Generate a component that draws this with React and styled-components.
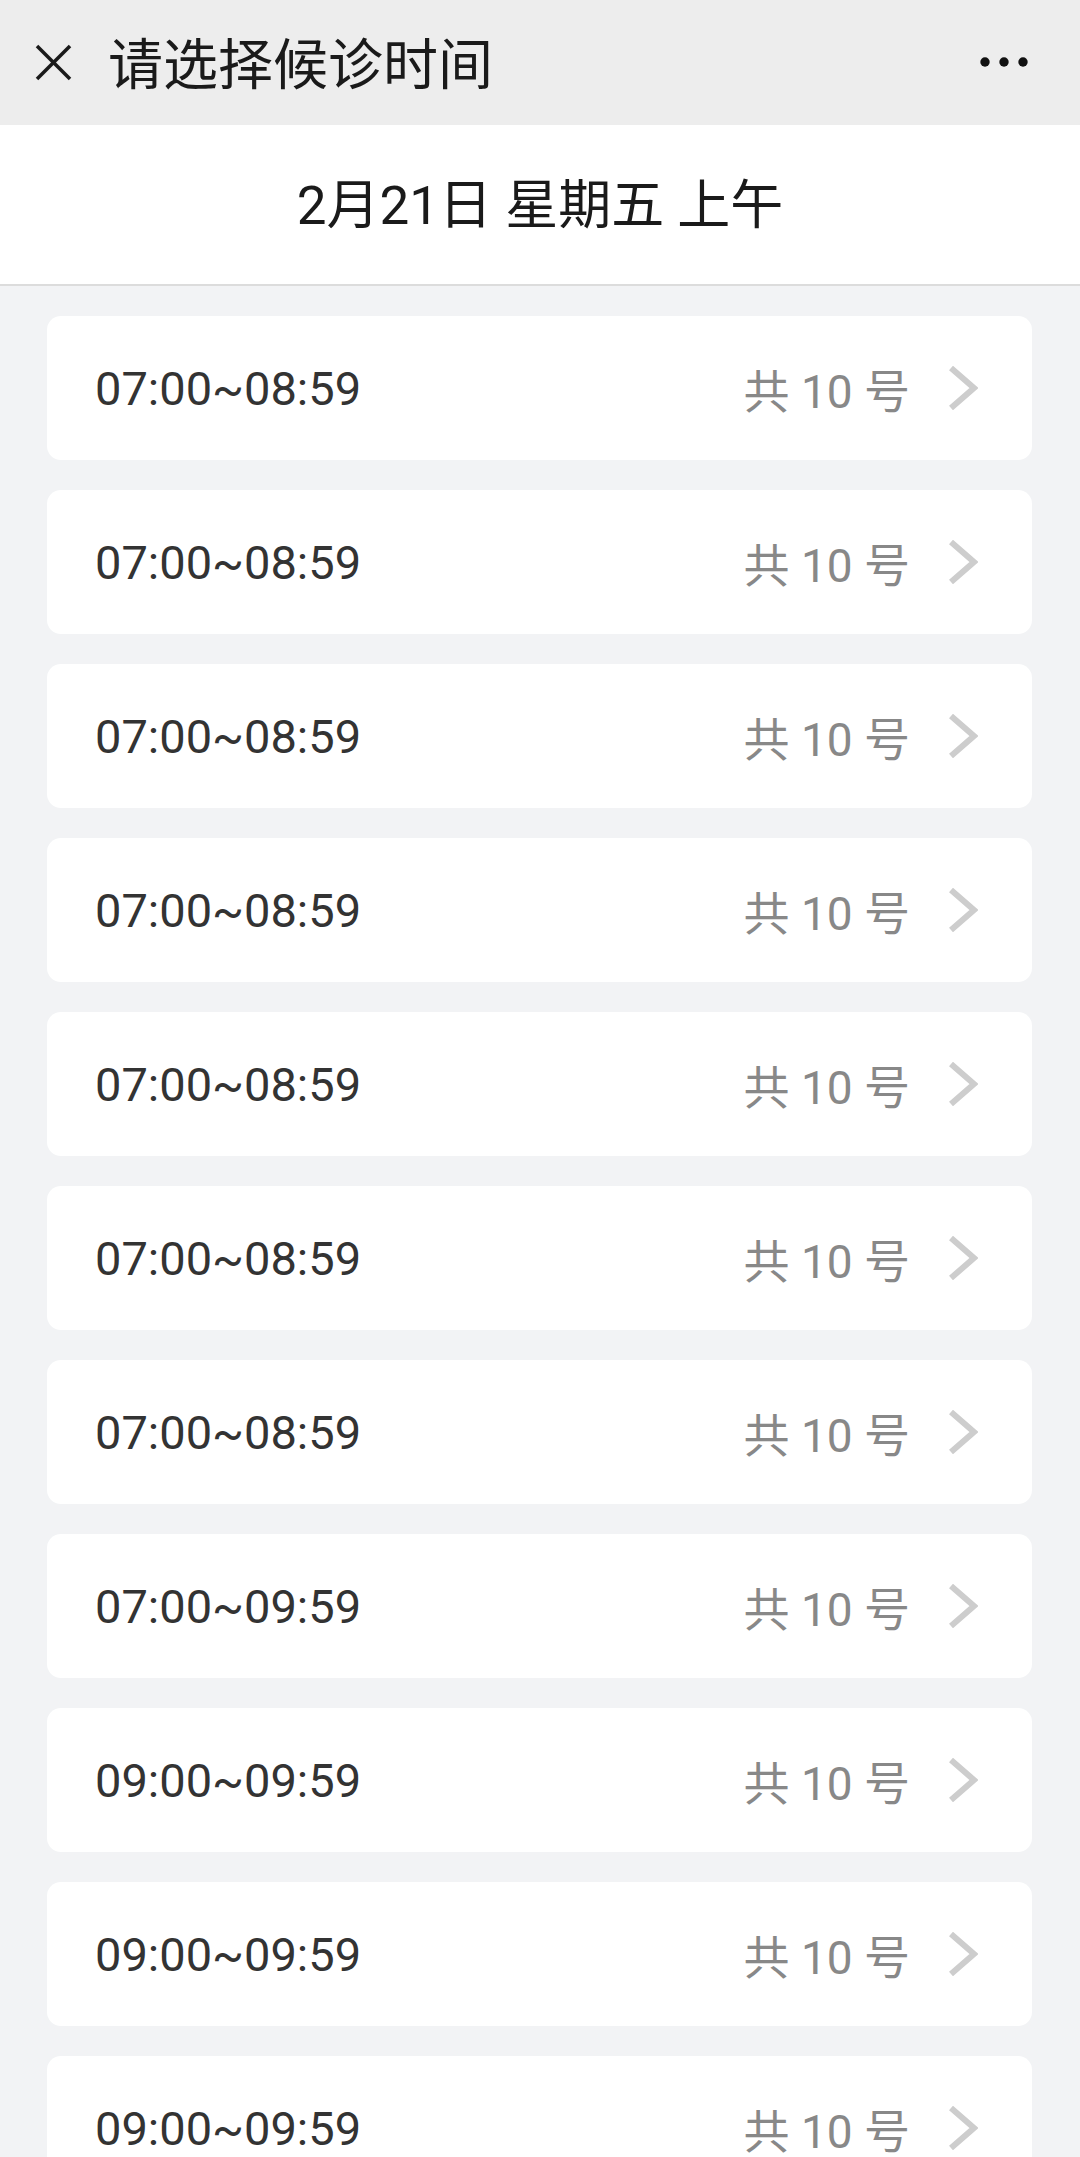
import React from "react";
import styled, { createGlobalStyle } from "styled-components";

const GlobalStyle = createGlobalStyle`
  html, body {
    margin: 0;
    padding: 0;
    background: #f2f3f5;
    font-family: Roboto, "Noto Sans CJK SC", sans-serif;
  }
`;

const slots = [
  "07:00~08:59",
  "07:00~08:59",
  "07:00~08:59",
  "07:00~08:59",
  "07:00~08:59",
  "07:00~08:59",
  "07:00~08:59",
  "07:00~09:59",
  "09:00~09:59",
  "09:00~09:59",
  "09:00~09:59",
];

function App() {
  return (
    <Page>
      <GlobalStyle />
      <TopBar>
        <CloseButton>
          <svg width="37" height="37" viewBox="0 0 37 37" fill="none">
            <line x1="2" y1="2" x2="35" y2="35" stroke="#1a1a1a" strokeWidth="3.6" />
            <line x1="35" y1="2" x2="2" y2="35" stroke="#1a1a1a" strokeWidth="3.6" />
          </svg>
        </CloseButton>
        <Title>请选择候诊时间</Title>
        <MoreButton>
          <svg width="48" height="12" viewBox="0 0 48 12">
            <circle cx="5" cy="6" r="4.7" fill="#111" />
            <circle cx="24" cy="6" r="4.7" fill="#111" />
            <circle cx="43" cy="6" r="4.7" fill="#111" />
          </svg>
        </MoreButton>
      </TopBar>
      <DateBar>2月21日 星期五 上午</DateBar>
      <SlotList>
        {slots.map((time, i) => (
          <SlotCard key={i}>
            <SlotTime>{time}</SlotTime>
            <SlotRight>
              <SlotCount>共 10 号</SlotCount>
              <Chevron>
                <svg width="30" height="44" viewBox="0 0 30 44" fill="none">
                  <polyline
                    points="3,2 26,22 3,42"
                    stroke="#cdcdcd"
                    strokeWidth="6"
                    strokeLinejoin="miter"
                  />
                </svg>
              </Chevron>
            </SlotRight>
          </SlotCard>
        ))}
      </SlotList>
    </Page>
  );
}

const Page = styled.div`
  width: 1080px;
  min-height: 2157px;
  background: #f2f3f5;
`;

const TopBar = styled.div`
  height: 125px;
  background: #ededed;
  display: flex;
  align-items: center;
  padding: 0 52px 0 35px;
  box-sizing: border-box;
`;

const CloseButton = styled.div`
  width: 37px;
  height: 37px;
  display: flex;
`;

const Title = styled.div`
  margin-left: 36px;
  margin-bottom: 5px;
  font-size: 55px;
  color: #1a1a1a;
  font-family: "Noto Sans CJK SC", sans-serif;
  line-height: 1;
  flex: 1;
`;

const MoreButton = styled.div`
  display: flex;
  align-items: center;
  margin-bottom: 2px;
`;

const DateBar = styled.div`
  height: 161px;
  box-sizing: border-box;
  padding-bottom: 8px;
  background: #ffffff;
  border-bottom: 2px solid #dcdcdc;
  display: flex;
  align-items: center;
  justify-content: center;
  font-size: 53px;
  color: #1a1a1a;
`;

const SlotList = styled.div`
  display: flex;
  flex-direction: column;
  gap: 30px;
  padding: 30px 48px 0 47px;
`;

const SlotCard = styled.div`
  height: 144px;
  background: #ffffff;
  border-radius: 14px;
  display: flex;
  align-items: center;
  justify-content: space-between;
  padding: 0 54px 0 48px;
  flex-shrink: 0;
`;

const SlotTime = styled.div`
  font-size: 47px;
  color: #333333;
`;

const SlotRight = styled.div`
  display: flex;
  align-items: center;
`;

const SlotCount = styled.div`
  font-size: 46px;
  color: #888888;
`;

const Chevron = styled.div`
  display: flex;
  margin-left: 38px;
`;

export default App;
